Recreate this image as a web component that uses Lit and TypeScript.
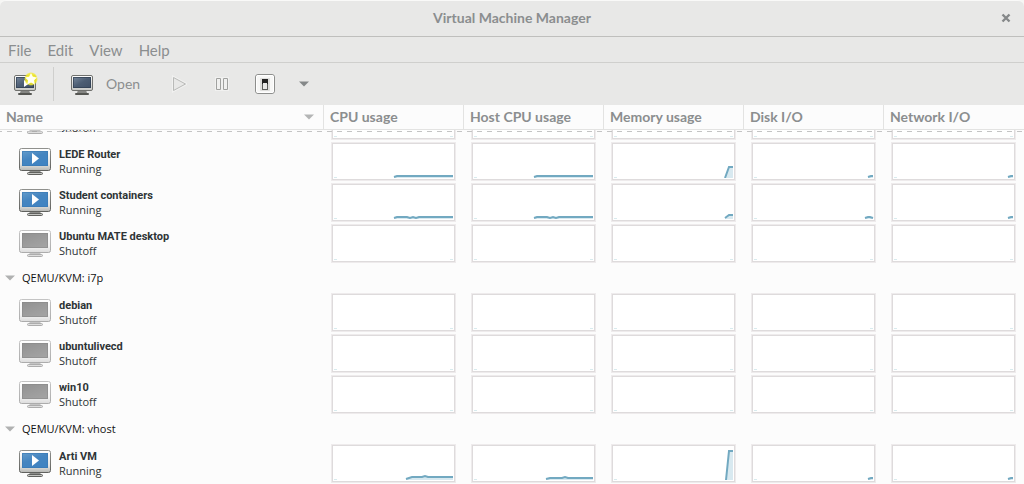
import { LitElement, html, css, svg, nothing } from "lit";
import { customElement, property, state } from "lit/decorators.js";

type VmState = "Running" | "Shutoff";

interface Vm {
  name: string;
  state: VmState;
  /** One polyline per usage column; an empty string means no samples. */
  graphs: string[];
}

interface Connection {
  label: string;
  vms: Vm[];
}

const IDLE = ["", "", "", "", ""];
const IO_TICK = "117,35 120,34 122,34";

const CONNECTIONS: Connection[] = [
  {
    label: "",
    vms: [
      { name: "", state: "Shutoff", graphs: IDLE },
      {
        name: "LEDE Router",
        state: "Running",
        graphs: ["63,35 66,34 122,34", "63,35 66,34 122,34", "114,36 118,25 122,25", IO_TICK, IO_TICK],
      },
      {
        name: "Student containers",
        state: "Running",
        graphs: [
          "63,35 66,34 76,34 79,35 82,34 85,35 88,34 122,34",
          "63,35 66,34 76,34 79,35 82,34 85,35 88,34 122,34",
          "114,35 118,32 122,32",
          "114,35 117,34 119,34 122,35",
          IO_TICK,
        ],
      },
      { name: "Ubuntu MATE desktop", state: "Shutoff", graphs: IDLE },
    ],
  },
  {
    label: "QEMU/KVM: i7p",
    vms: [
      { name: "debian", state: "Shutoff", graphs: IDLE },
      { name: "ubuntulivecd", state: "Shutoff", graphs: IDLE },
      { name: "win10", state: "Shutoff", graphs: IDLE },
    ],
  },
  {
    label: "QEMU/KVM: vhost",
    vms: [
      {
        name: "Arti VM",
        state: "Running",
        graphs: [
          "75,35 81,33 91,33 94,32 97,33 122,33",
          "75,35 79,34 91,34 94,33 97,34 122,34",
          "115,36 118,7 122,7",
          IO_TICK,
          IO_TICK,
        ],
      },
    ],
  },
];

@customElement("usage-graph")
class UsageGraph extends LitElement {
  @property() points = "";

  static styles = css`
    :host {
      display: block;
    }
    .graph {
      display: block;
      width: 100%;
      height: 39px;
    }
  `;

  render() {
    const start = this.points.split(",")[0];
    return html`<svg class="graph" viewBox="0 0 125 39" preserveAspectRatio="none" aria-hidden="true">
      <rect x="0.5" y="0.5" width="124" height="38" fill="none" stroke="#eeebec" />
      <rect x="1.5" y="1.5" width="122" height="36" fill="#fff" stroke="#dedbdc" />
      <path d="M3 35.5h3" stroke="#d8ebee" />
      ${this.points
        ? svg`<polygon points="${start},36 ${this.points} 122,36" fill="#d8e9f0" />
            <polyline points=${this.points} fill="none" stroke="#72a9c1" stroke-width="2" />
            <path d="M${start} 36.5H122" stroke="#fff" />`
        : svg`<path d="M119 35.5h3" stroke="#d8ebee" />`}
    </svg>`;
  }
}

@customElement("vm-monitor")
class VmMonitor extends LitElement {
  @property() state: VmState = "Shutoff";

  static styles = css`
    :host {
      display: block;
    }
    .monitor {
      display: block;
      width: 32px;
      height: 28px;
    }
  `;

  render() {
    const on = this.state === "Running";
    return html`<svg class="monitor" viewBox="0 0 32 28" aria-hidden="true">
      <defs>
        <linearGradient id="bezel" x1="0" y1="0" x2="0" y2="1">
          <stop offset="0" stop-color="#fff" />
          <stop offset="0.7" stop-color=${on ? "#e4e4e2" : "#f3f3f3"} />
          <stop offset="1" stop-color=${on ? "#b5b6b3" : "#dcdcdc"} />
        </linearGradient>
        <linearGradient id="edge" x1="0" y1="0" x2="0" y2="1">
          <stop offset="0" stop-color=${on ? "#8f908d" : "#c4c4c4"} />
          <stop offset="1" stop-color=${on ? "#60615e" : "#acacac"} />
        </linearGradient>
        <linearGradient id="glass" x1="0" y1="0" x2="0.6" y2="1">
          <stop offset="0" stop-color=${on ? "#649ccb" : "#919191"} />
          <stop offset="0.5" stop-color=${on ? "#4585c0" : "#9a9a9a"} />
          <stop offset="1" stop-color=${on ? "#3f83c2" : "#a2a2a2"} />
        </linearGradient>
      </defs>
      <path d="M11 22h10l1 3h-12z" fill=${on ? "#8c8d8a" : "#c4c4c4"} />
      <rect x="8.5" y="24.5" width="15" height="2" rx="1" fill=${on ? "#c2c3c0" : "#dedede"} stroke=${on ? "#60615e" : "#adadad"} />
      <rect x="0.5" y="0.5" width="31" height="22" rx="2" fill="url(#bezel)" stroke="url(#edge)" />
      <rect x="3" y="3" width="26" height="15" fill="url(#glass)" />
      <rect x="3.5" y="3.5" width="25" height="14" fill="none" stroke=${on ? "#3878b2" : "#888"} stroke-opacity="0.6" />
      ${on ? svg`<path d="M13 5L20 10.500L13 16z" fill="#fff" />` : nothing}
    </svg>`;
  }
}

@customElement("app-root")
class AppRoot extends LitElement {
  @state() private collapsed = new Set<number>();

  static styles = css`
    :host {
      display: flex;
      flex-direction: column;
      height: 100vh;
      overflow: hidden;
      background: #e8e8e7;
      color: #8b8e8f;
      font: 14px/20px Lato, "Open Sans", sans-serif;
    }
    button {
      display: flex;
      align-items: center;
      justify-content: center;
      margin: 0;
      padding: 0;
      border: 0;
      background: none;
      color: inherit;
      font: inherit;
    }
    svg {
      display: block;
    }
    .titlebar {
      display: grid;
      grid-template-columns: 36px 1fr 36px;
      height: 36px;
      flex: none;
      background: #f6f6f4;
      border-bottom: 1px solid #bfbfbd;
    }
    .titlebar-fill {
      grid-column: 1 / -1;
      grid-row: 1;
      border-radius: 6px 6px 0 0;
      border-top: 1px solid #f9f9f8;
      background: #e8e8e7;
    }
    .title {
      grid-column: 2;
      grid-row: 1;
      margin: 0;
      font-size: 14px;
      font-weight: bold;
      line-height: 36px;
      text-align: center;
    }
    .close {
      grid-column: 3;
      grid-row: 1;
    }
    .menubar {
      display: flex;
      flex: none;
      gap: 16px;
      height: 25px;
      padding: 0 8px;
      border-bottom: 1px solid #cfcfcd;
      font-size: 15px;
    }
    .toolbar {
      display: flex;
      flex: none;
      align-items: center;
      height: 42px;
    }
    .new-vm {
      width: 53px;
      height: 34px;
      padding-right: 3px;
    }
    .open {
      gap: 11px;
      height: 34px;
      margin-right: 15px;
      padding: 0 2px 0 15px;
      border-left: 1px solid #cfcfcd;
    }
    .tool {
      width: 43px;
      height: 34px;
    }
    .caret-tool {
      width: 36px;
      height: 34px;
    }
    .list {
      flex: 1;
      min-height: 0;
      overflow: auto;
      scrollbar-width: none;
      background: #fcfcfc;
    }
    table {
      width: 100%;
      table-layout: fixed;
      border-spacing: 0;
    }
    .usage-col {
      width: 140px;
    }
    thead {
      position: sticky;
      top: 0;
      z-index: 1;
    }
    th {
      box-sizing: border-box;
      height: 25px;
      padding: 0 14px 0 6px;
      border-right: 1px solid #e3e3e2;
      border-bottom: 1px solid #e3e3e2;
      background: #fcfcfc;
      font-weight: bold;
      text-align: left;
      white-space: nowrap;
    }
    th:first-child {
      padding-right: 9px;
    }
    th:last-child {
      border-right: 0;
    }
    .sort {
      width: 100%;
      justify-content: space-between;
    }
    thead::after {
      content: "";
      position: absolute;
      top: 26px;
      left: 0;
      right: 0;
      height: 1px;
      background: repeating-linear-gradient(90deg, #c4c4c4 0 2px, transparent 2px 7px, #c4c4c4 7px 10px);
    }
    td {
      height: 41px;
      padding: 0 8px 0 7px;
    }
    .vm-cell {
      padding: 0 0 0 19px;
    }
    .vm {
      display: flex;
      align-items: center;
      gap: 8px;
      height: 41px;
      color: #2e3436;
      font: 11px/13px "Open Sans", sans-serif;
    }
    .vm-name {
      display: block;
      min-height: 14px;
      font: bold 11px/14px Roboto, sans-serif;
    }
    .vm-text {
      white-space: nowrap;
    }
    .group-cell {
      height: 28px;
      padding: 0 5px;
    }
    .group {
      gap: 7px;
      color: #111;
      font: 11px/14px "Open Sans", sans-serif;
    }
  `;

  firstUpdated() {
    const list = this.renderRoot.querySelector(".list")!;
    list.scrollTop = 30;
  }

  private toggle(index: number) {
    const next = new Set(this.collapsed);
    next.has(index) ? next.delete(index) : next.add(index);
    this.collapsed = next;
  }

  private consoleIcon(isNew: boolean) {
    return html`<svg width="26" height="24" viewBox="0 0 26 24" aria-hidden="true">
      <defs>
        <linearGradient id="frame" x1="0" y1="0" x2="0" y2="1">
          <stop offset="0" stop-color="#fff" />
          <stop offset="1" stop-color="#c5c6c3" />
        </linearGradient>
        <linearGradient id="screen" x1="0" y1="0" x2="1" y2="1">
          <stop offset="0" stop-color="#76879b" />
          <stop offset="0.5" stop-color="#4c5d73" />
          <stop offset="1" stop-color="#405066" />
        </linearGradient>
        <radialGradient id="glow">
          <stop offset="0.45" stop-color="#f4ec25" />
          <stop offset="0.8" stop-color="#f1e92e" stop-opacity="0.85" />
          <stop offset="1" stop-color="#f1e92e" stop-opacity="0" />
        </radialGradient>
      </defs>
      <path d="M9 18h8l1 3H8z" fill="#858683" />
      <rect x="6" y="21" width="14" height="2" rx="1" fill="#565753" />
      <rect x="2.5" y="3.500" width="21" height="15" rx="1.500" fill="url(#frame)" stroke="#70716e" />
      <rect x="4" y="5" width="18" height="11" fill="url(#screen)" />
      <rect x="4.500" y="5.500" width="17" height="10" fill="none" stroke="#2f3d50" stroke-opacity="0.7" />
      ${isNew
        ? svg`<path d="M12 8l5 3.500-5 3.500z" fill="#fff" />
            <circle cx="19" cy="7" r="7" fill="url(#glow)" />
            <path d="M19 1l1.900 3.800 4.100.6-3 2.900.7 4.100-3.700-1.900-3.700 1.900.7-4.100-3-2.900 4.100-.6z" fill="#fffff2" />`
        : nothing}
    </svg>`;
  }

  private caret(color: string) {
    return html`<svg width="10" height="6" viewBox="0 0 10 6" aria-hidden="true"><path d="M0 .5h10L5 5.500z" fill=${color} /></svg>`;
  }

  private renderVm(vm: Vm) {
    return html`<tr>
      <td class="vm-cell">
        <div class="vm">
          <vm-monitor .state=${vm.state}></vm-monitor>
          <div class="vm-text"><span class="vm-name">${vm.name}</span>${vm.state}</div>
        </div>
      </td>
      ${vm.graphs.map((points) => html`<td><usage-graph .points=${points}></usage-graph></td>`)}
    </tr>`;
  }

  render() {
    return html`
      <header class="titlebar">
        <div class="titlebar-fill"></div>
        <h1 class="title">Virtual Machine Manager</h1>
        <button class="close" aria-label="Close">
          <svg width="10" height="10" viewBox="0 0 10 10"><path d="M1.500 1.500l7 7M8.500 1.500l-7 7" stroke="#858889" stroke-width="2.400" /></svg>
        </button>
      </header>
      <nav class="menubar">
        ${["File", "Edit", "View", "Help"].map((item) => html`<button>${item}</button>`)}
      </nav>
      <div class="toolbar" role="toolbar">
        <button class="new-vm" aria-label="New virtual machine">${this.consoleIcon(true)}</button>
        <button class="open">${this.consoleIcon(false)}<span>Open</span></button>
        <button class="tool" aria-label="Run">
          <svg width="16" height="18" viewBox="0 0 16 18"><path d="M2.500 2.500v13L14.500 9z" fill="#ececeb" stroke="#fff" stroke-width="3" stroke-opacity=".4" /><path d="M2.500 2.500v13L14.500 9z" fill="#e8e8e7" stroke="#b9bab8" /></svg>
        </button>
        <button class="tool" aria-label="Pause">
          <svg width="16" height="16" viewBox="0 0 16 16"><path d="M2.500 2.500h4v11h-4zM9.500 2.500h4v11h-4z" fill="#ededec" stroke="#fff" stroke-width="3" stroke-opacity=".4" /><path d="M2.500 2.500h4v11h-4zM9.500 2.500h4v11h-4z" fill="#f0f0ef" stroke="#a0a19f" /></svg>
        </button>
        <button class="tool" aria-label="Shut down">
          <svg width="20" height="20" viewBox="0 0 20 20">
            <rect x=".5" y=".5" width="19" height="19" rx="2.500" fill="#f7f7f6" stroke="#8d8e8c" />
            <rect x="1.500" y="1.500" width="17" height="17" rx="1.500" fill="none" stroke="#fff" />
            <rect x="5" y="4" width="10" height="13" rx="1" fill="#dededc" />
            <rect x="7" y="5" width="6" height="11" fill="#5c5d5b" />
            <rect x="7" y="5" width="6" height="5" fill="#222" />
            <rect x="8" y="9" width="4" height="6" fill="#e8e8e7" />
          </svg>
        </button>
        <button class="caret-tool" aria-label="Shut down options">${this.caret("#858889")}</button>
      </div>
      <main class="list">
        <table>
          <colgroup>
            <col />
            ${IDLE.map(() => html`<col class="usage-col" />`)}
          </colgroup>
          <thead>
            <tr>
              <th><button class="sort">Name ${this.caret("#b4b5b5")}</button></th>
              ${["CPU usage", "Host CPU usage", "Memory usage", "Disk I/O", "Network I/O"].map(
                (title) => html`<th>${title}</th>`,
              )}
            </tr>
          </thead>
          <tbody>
            ${CONNECTIONS.map(
              (connection, index) => html`
                ${connection.label
                  ? html`<tr>
                      <td class="group-cell" colspan="6">
                        <button class="group" aria-expanded=${!this.collapsed.has(index)} @click=${() => this.toggle(index)}>
                          ${this.caret("#b0b1b1")}${connection.label}
                        </button>
                      </td>
                    </tr>`
                  : nothing}
                ${this.collapsed.has(index) ? nothing : connection.vms.map((vm) => this.renderVm(vm))}
              `,
            )}
          </tbody>
        </table>
      </main>
    `;
  }
}
